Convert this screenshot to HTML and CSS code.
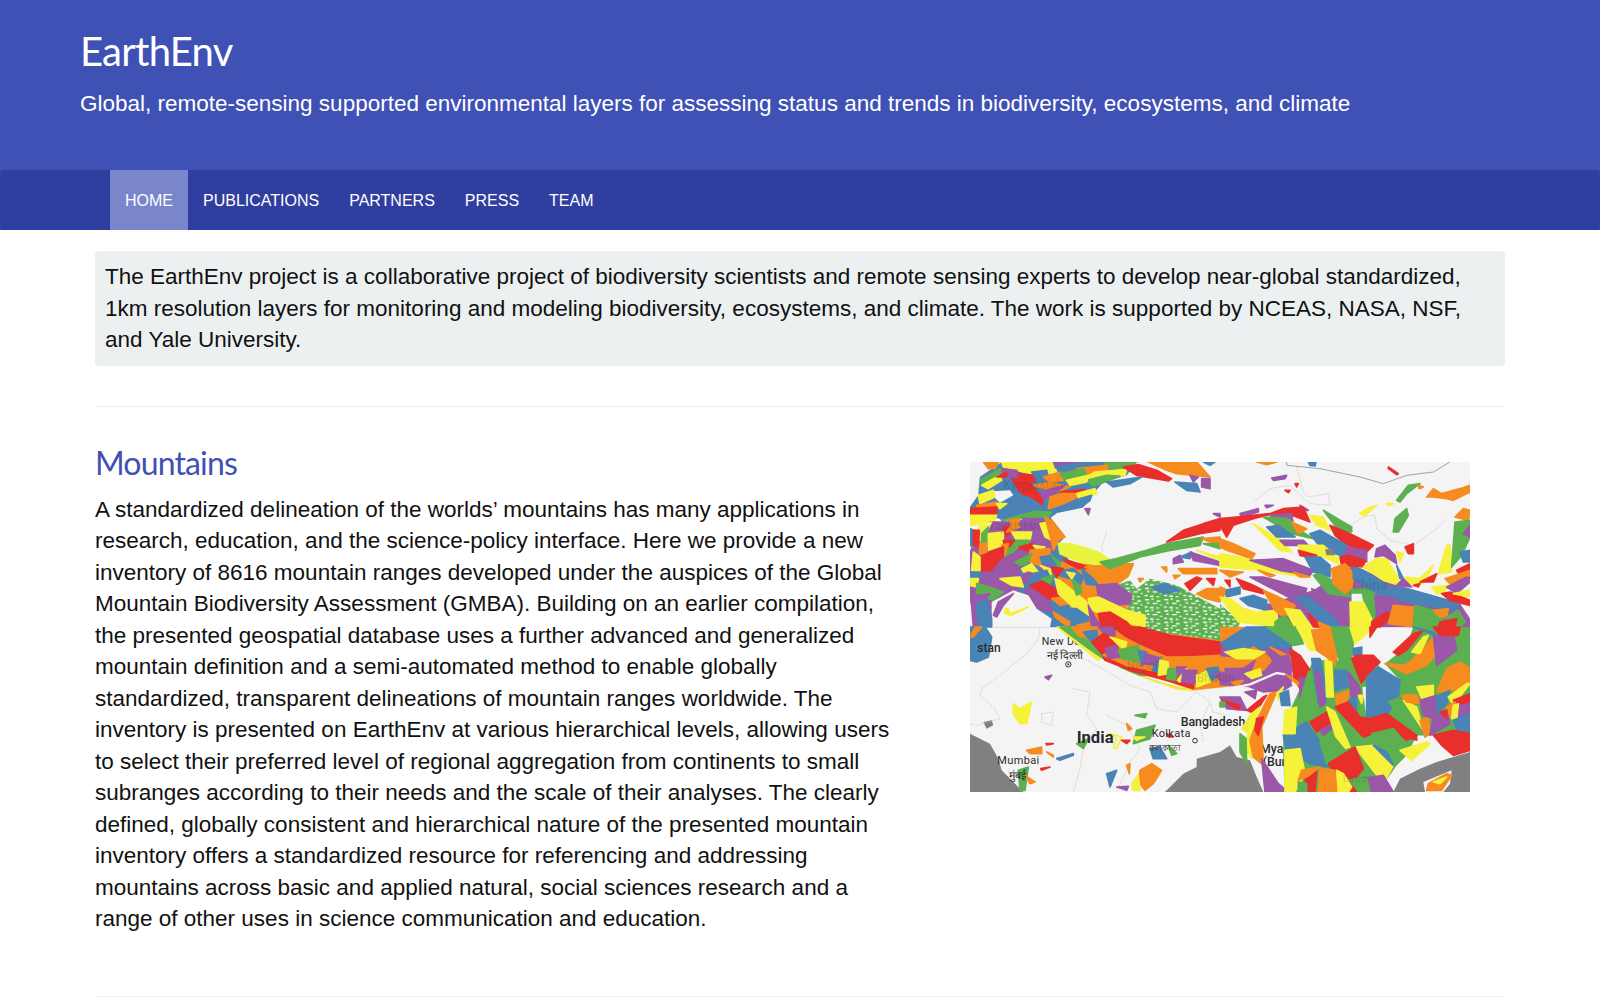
FILE: index.html
```html
<!DOCTYPE html>
<html lang="en">
<head>
<meta charset="utf-8">
<title>EarthEnv</title>
<link rel="stylesheet" href="styles.css">
</head>
<body>
<header class="masthead">
  <h1 class="site-title">EarthEnv</h1>
  <p class="site-tagline">Global, remote-sensing supported environmental layers for assessing status and trends in biodiversity, ecosystems, and climate</p>
</header>
<div class="nav-shell">
<nav class="navbar">
  <ul class="nav-list">
    <li><a class="nav-link active" href="#">HOME</a></li>
    <li><a class="nav-link" href="#">PUBLICATIONS</a></li>
    <li><a class="nav-link" href="#">PARTNERS</a></li>
    <li><a class="nav-link" href="#">PRESS</a></li>
    <li><a class="nav-link" href="#">TEAM</a></li>
  </ul>
</nav>
</div>
<main class="container">
  <div class="intro">The EarthEnv project is a collaborative project of biodiversity scientists and remote sensing experts to develop near-global standardized, 1km resolution layers for monitoring and modeling biodiversity, ecosystems, and climate. The work is supported by NCEAS, NASA, NSF, and Yale University.</div>
  <hr class="rule rule-first">
  <section class="feature">
    <div class="feature-text">
      <h2 class="feature-title">Mountains</h2>
      <p class="feature-body">A standardized delineation of the worlds’ mountains has many applications in research, education, and the science-policy interface. Here we provide a new inventory of 8616 mountain ranges developed under the auspices of the Global Mountain Biodiversity Assessment (GMBA). Building on an earlier compilation, the presented geospatial database uses a further advanced and generalized mountain definition and a semi-automated method to enable globally standardized, transparent delineations of mountain ranges worldwide. The inventory is presented on EarthEnv at various hierarchical levels, allowing users to select their preferred level of regional aggregation from continents to small subranges according to their needs and the scale of their analyses. The clearly defined, globally consistent and hierarchical nature of the presented mountain inventory offers a standardized resource for referencing and addressing mountains across basic and applied natural, social sciences research and a range of other uses in science communication and education.</p>
    </div>
    <div class="feature-media">
      <svg class="map" viewBox="0 0 1500 990" width="500" height="330" role="img" aria-label="Map of mountain ranges across Central and South Asia">
        <defs>
          <pattern id="speck" width="58" height="34" patternUnits="userSpaceOnUse">
            <rect width="58" height="34" class="g"/>
            <path d="M3 5h12M22 3h6M38 9h11M9 15h7M26 16h14M48 21h6M2 27h9M18 29h11M37 30h8" class="speck-line"/>
          </pattern>
        </defs>
        <rect width="1500" height="990" class="land"/>
        <g class="sea">
          <path d="M0 815 60 845 85 890 95 925 130 960 160 990H0Z"/>
          <path d="M585 990 640 935 680 915 680 890 750 870 780 850 800 885 840 895 860 945 880 990Z"/>
          <path d="M1270 990 1290 950 1350 920 1400 900 1500 870V990Z"/>
          <path d="M40 780 65 775 70 790 50 800Z"/>
        </g>
        <g class="borders">
          <path class="solid" d="M950 0 950 10 1050 20 1170 45 1240 65 1310 40 1390 30 1440 0"/>
          <path d="M980 15 1000 90 1015 105 1075 95 1080 130 1020 125 960 70 900 80 850 120"/>
          <path d="M1140 190 1180 165 1215 160 1220 200 1260 235 1330 250 1400 200 1430 170"/>
          <path d="M410 210 395 255 400 270"/>
          <path d="M130 440 170 470 200 465 210 495 205 530 165 580 90 640 35 680 30 700 70 735 90 770 55 780 20 790 0 785"/>
          <path d="M340 590 380 610 430 640 480 670 540 690 560 740 620 750 680 690 720 720 730 750 770 760"/>
          <path d="M215 755 250 750 245 790 215 780Z"/>
          <path d="M310 680 360 690 350 760 380 800 340 860 330 920 310 990"/>
          <path d="M410 760 470 790 510 860 480 900 440 990"/>
          <path d="M720 720 690 790 700 840"/>
          <path d="M1290 690 1260 720 1270 800"/>
        </g>
        <g class="labels">
          <text x="215" y="548" class="lb lb-sm">New Delhi</text>
          <text x="230" y="590" class="lb lb-de">नई दिल्ली</text>
          <circle cx="295" cy="607" r="8" class="dot"/>
          <circle cx="295" cy="607" r="3" class="dot-fill"/>
          <text x="632" y="792" class="lb lb-md2">Bangladesh</text>
          <text x="870" y="873" class="lb lb-md2">Myanmar</text>
          <text x="878" y="913" class="lb lb-md2">(Burma)</text>
        </g>
        <g class="under">
          <path class="b" d="M30 45 95 0H500L470 40 400 60 365 100 340 135 265 150 240 168H0V135L25 100Z"/>
          <path class="land-i" d="M70 88 120 85 130 100 90 122 72 105Z"/>
          <path class="p" d="M0 268 30 195 150 175 150 495H25L0 405Z"/>
          <path class="b" d="M150 175 240 165 285 225 265 245 300 300V495H150Z"/>
          <path class="o" d="M300 300 390 310 490 310 475 345 440 370 490 400 470 440 525 465 525 495H300Z"/>
          <path class="o" d="M262 495 395 585 590 655 670 685 900 660 900 495Z"/>
          <path class="p" d="M750 545 890 495 965 560 965 665 840 675 750 670Z"/>
          <path class="g" d="M940 820 965 735 1030 595 1170 595 1220 605 1175 665 1190 775 1250 770 1340 820 1310 880 1280 910 1240 965 1270 990H945L940 870Z"/>
          <path class="g" d="M1245 605 1310 555 1330 495H1500V865L1450 880 1390 820 1340 820 1250 755 1285 705 1290 655Z"/>
          <path class="p" d="M880 430 965 405 1030 385 1150 310 1280 370 1470 425 1500 470V495H880Z"/>
        </g>
        <g class="q1">
          <path class="o" d="M40 0H85L75 20 55 20Z"/><path class="y" d="M95 0H255L260 35 180 35 100 15Z"/><path class="p" d="M90 20 140 25 150 45 110 45Z"/>
          <path class="p" d="M250 0H350L290 15 255 12Z"/><path class="b" d="M255 15 360 0 385 5 330 20 280 35Z"/><path class="g" d="M405 0H500L450 22 400 15Z"/>
          <path class="o" d="M320 20 410 10 415 25 340 50Z"/><path class="y" d="M375 30 470 22 465 40 360 55 350 45Z"/><path class="r" d="M460 15 505 8 560 25 605 50 595 57 500 40Z"/>
          <path class="o" d="M535 0H680L720 45 620 35 590 25Z"/><path class="b" d="M700 0H735L720 10Z"/><path class="g" d="M350 55 410 40 450 42 405 60 370 72Z"/>
          <path class="b" d="M410 60 515 45 480 65 430 75Z"/><path class="b" d="M615 60 680 65 690 90 650 85Z"/><path class="p" d="M660 40 685 45 670 60Z"/><path class="p" d="M695 50 720 50 720 80 695 75Z"/>
          <path class="g" d="M30 55 90 20 95 40 40 70Z"/><path class="y" d="M35 70 90 40 95 55 55 80Z"/><path class="r" d="M80 45 110 30 110 45Z"/><path class="r" d="M145 35 195 40 195 58 150 55Z"/>
          <path class="b" d="M185 30 230 25 235 45 200 50Z"/><path class="o" d="M220 45 270 30 280 55 240 60Z"/><path class="g" d="M270 35 340 20 350 35 290 60Z"/><path class="y" d="M290 55 355 40 350 60 300 70Z"/>
          <path class="o" d="M190 70 240 60 300 75 260 90Z"/><path class="b" d="M100 60 150 55 210 90 170 90Z"/><path class="r" d="M125 50 175 55 220 115 215 130 150 90Z"/><path class="p" d="M210 90 285 70 240 105 220 110Z"/>
          <path class="r" d="M270 90 345 82 340 95 275 100Z"/><path class="o" d="M240 105 270 95 340 95 285 125 235 140Z"/><path class="y" d="M320 95 375 80 380 95 330 115Z"/><path class="b" d="M255 140 330 110 365 100 360 115 335 135 265 150Z"/>
          <path class="p" d="M345 140 360 140 355 158Z"/><path class="y" d="M25 100 70 85 75 105 30 125Z"/><path class="o" d="M20 130 80 120 85 135 25 145Z"/><path class="y" d="M80 125 110 125 90 140Z"/>
          <path class="b" d="M75 160 150 105 175 105 240 150 200 150 100 175Z"/><path class="r" d="M0 140 80 135 80 155 0 160Z"/><path class="y" d="M0 160 80 160 70 180 0 190Z"/><path class="g" d="M95 175 195 148 245 150 235 165 140 170Z"/>
          <path class="b" d="M0 200 12 205 12 255 0 250Z"/><path class="y" d="M20 220 30 190 60 190 35 240Z"/><path class="r" d="M10 205 28 205 25 255 10 250Z"/><path class="g" d="M35 215 55 195 50 240 35 245Z"/>
          <path class="o" d="M115 175 150 170 140 195Z"/><path class="p" d="M150 195 160 170 215 170 240 240 250 270 195 255 170 240Z"/><path class="p" d="M70 180 115 180 100 210 55 215Z"/><path class="y" d="M55 215 100 210 100 250 55 265Z"/>
          <path class="y" d="M210 185 235 180 245 235 225 225Z"/><path class="o" d="M225 165 250 180 285 225 265 235 250 265 240 220Z"/><path class="r" d="M100 195 135 195 110 225Z"/><path class="o" d="M130 180 150 195 110 210Z"/>
          <path class="y" d="M125 210 185 210 180 235 140 235Z"/><path class="r" d="M100 235 135 235 130 260 105 260Z"/><path class="g" d="M140 235 180 235 170 250 125 255Z"/><path class="r" d="M145 255 190 245 185 265 150 270Z"/>
          <path class="g" d="M105 260 145 255 120 280 100 285Z"/><path class="o" d="M95 250 115 245 105 280Z"/><path class="o" d="M30 245 50 245 50 275 28 275Z"/><path class="r" d="M30 285 60 270 100 255 100 300 65 330 30 330Z"/>
          <path class="y" d="M10 270 30 285 30 330 5 325Z"/><path class="p" d="M30 330 65 330 100 290 150 265 185 275 150 320 125 345 90 370 60 370 30 350Z"/><path class="y" d="M190 250 225 255 210 270Z"/><path class="o" d="M180 265 240 260 240 285 205 310 180 300Z"/>
          <path class="g" d="M135 300 185 275 170 305 150 310Z"/><path class="y" d="M155 320 185 305 205 330 160 330Z"/><path class="b" d="M210 285 245 280 265 300 250 310 220 310Z"/><path class="g" d="M245 280 280 310 270 320Z"/>
          <path class="r" d="M280 290 340 310 365 320 310 320Z"/><path class="o" d="M275 300 315 320 310 335 275 320Z"/><path class="yl" d="M265 245 300 245 385 270 415 290 395 310 330 300 270 275Z"/><path class="o" d="M345 315 400 310 490 305 475 340 430 355 390 345Z"/>
          <path class="p" d="M210 310 245 310 250 340 215 345Z"/><path class="r" d="M245 315 280 320 260 345Z"/><path class="y" d="M210 310 240 320 245 340Z"/><path class="b" d="M280 325 310 320 340 345 330 370 290 345Z"/>
          <path class="p" d="M150 345 175 330 190 335 165 375Z"/><path class="y" d="M90 350 150 345 160 375 125 370Z"/><path class="b" d="M165 375 190 335 230 325 255 375 260 395 200 370Z"/><path class="g" d="M215 350 250 340 240 365Z"/>
          <path class="p" d="M165 385 185 375 235 415 250 450 200 440Z"/><path class="r" d="M180 370 215 358 265 385 265 415 235 410Z"/><path class="o" d="M245 410 270 405 295 425 270 430Z"/>
          <path class="o" d="M265 345 300 355 330 400 320 410Z"/><path class="y" d="M255 350 270 355 350 420 355 460 320 445 265 395Z"/><path class="g" d="M305 350 330 370 345 385 320 400Z"/><path class="y" d="M290 330 315 335 305 350Z"/>
          <path class="b" d="M335 320 370 350 385 370 350 370Z"/><path class="o" d="M335 370 380 375 385 395 345 405Z"/>
          <path class="b" d="M245 430 290 440 320 440 355 465 355 495 280 495 265 455Z"/><path class="o" d="M250 450 300 480 295 495 255 465Z"/><path class="o" d="M320 490 365 480 370 495Z"/>
          <path class="b" d="M0 330 30 330 35 345 0 350Z"/><path class="y" d="M0 350 25 350 20 375 0 370Z"/><path class="g" d="M20 365 60 375 100 390 70 415 20 395Z"/>
          <path class="land-i" d="M65 420 130 385 175 400 200 440 245 470 240 495H65Z"/>
          <path class="p" d="M0 400 30 400 60 395 25 440 25 495 10 495 5 430Z"/><path class="b" d="M20 425 50 410 65 470 65 495 25 495Z"/><path class="p" d="M85 420 130 395 100 430 80 465 70 460Z"/><path class="y" d="M105 440 115 440 120 455 175 435 125 460 105 455Z"/>
          <path class="sp" d="M440 370 480 355 500 380 540 350 620 370 750 440V495H500L530 470 470 440 490 400Z"/><path class="b" d="M545 375 590 365 630 385 580 395Z"/>
          <path class="p" d="M380 370 440 365 485 400 480 425 430 430 385 405Z"/><path class="y" d="M355 410 385 405 470 445 525 460 525 495 430 475 360 440Z"/><path class="p" d="M355 430 380 475 400 495H365Z"/><path class="r" d="M385 455 420 450 470 480 485 495H395Z"/>
          <path class="g" d="M390 300 440 290 530 265 590 245 700 225 690 250 600 265 510 285 420 320Z"/><path class="r" d="M590 240 640 205 700 185 750 170V205L690 215Z"/><path class="p" d="M730 155H750V165Z"/>
          <path class="o" d="M575 315H590V330Z"/><path class="o" d="M505 350H520L510 360Z"/><path class="o" d="M625 320H740V335H640Z"/><path class="o" d="M610 340H630L615 350Z"/><path class="r" d="M645 365 680 345 695 350 660 385Z"/><path class="r" d="M710 350H735L730 370Z"/><path class="o" d="M680 395 710 380H750V420L710 410Z"/>
          <path class="p" d="M610 290 630 280 640 300 610 305Z"/><path class="b" d="M630 285 665 270 660 290Z"/><path class="p" d="M660 270 750 300V310L670 295Z"/><path class="y" d="M680 265 750 285V295Z"/><path class="o" d="M695 230 750 225V245L720 240Z"/><path class="g" d="M700 245 750 245V260Z"/>
        </g>
        <g class="q2" transform="translate(750 0)">
          <path class="o" d="M110 0H170L140 8Z"/><path class="b" d="M265 0H288L285 12 270 10Z"/><path class="p" d="M155 48 200 40 195 50 160 55Z"/><path class="r" d="M225 65H235L230 75Z"/><path class="r" d="M195 85H210L205 92Z"/><path class="r" d="M505 15 535 35 530 38 505 20Z"/>
          <path class="g" d="M530 115 565 70 600 65 560 95 540 120Z"/><path class="o" d="M595 70 610 75 598 80Z"/><path class="o" d="M620 105 640 80 665 95 720 80 750 70V90L700 115 680 110 640 105Z"/><path class="o" d="M705 165 730 140 750 145 745 175Z"/>
          <path class="y" d="M420 155 440 140 470 130 435 160Z"/><path class="y" d="M500 125H520L505 132Z"/><path class="g" d="M310 145 360 175 395 195V210H360Z"/><path class="g" d="M520 210 525 170 560 140 565 160 535 210Z"/>
          <path class="p" d="M60 155 115 140V150L65 165Z"/><path class="p" d="M135 130H160L140 137Z"/><path class="p" d="M240 130 265 145 245 145Z"/>
          <path class="r" d="M0 170 50 165 150 155 190 140 250 135 270 180 215 160 160 155 100 170 40 190 20 225 0 190Z"/><path class="p" d="M150 160 215 155 220 190 170 175Z"/><path class="g" d="M130 165 205 170 240 205 280 230 215 215Z"/>
          <path class="y" d="M100 185 140 210 185 235 215 270 180 265 140 225Z"/><path class="b" d="M140 195 175 190 225 225H170Z"/><path class="o" d="M215 180 260 200 235 215Z"/><path class="y" d="M270 160 310 165 330 205 290 190Z"/>
          <path class="p" d="M180 235H250L265 250H195Z"/><path class="r" d="M330 190 390 215 460 250 440 270 380 250 345 220Z"/><path class="b" d="M270 215 300 205 380 250 370 285 300 255Z"/>
          <path class="y" d="M235 250H310L355 290V305L300 280 240 265Z"/><path class="r" d="M235 265 290 280 285 290 240 280Z"/><path class="sea-i" d="M315 262H340L345 280H320Z"/><path class="p" d="M380 255 440 265V300L375 285Z"/><path class="r" d="M360 285 385 280 435 295 430 315 365 310Z"/><path class="b" d="M255 285H300L330 310V345L280 330Z"/>
          <path class="o" d="M0 230 40 245 105 275 95 290 20 265 0 255Z"/><path class="y" d="M0 275 60 285 150 310 270 340 250 345 130 325 0 315Z"/><path class="p" d="M90 295 190 290 280 325 270 340 180 325Z"/><path class="o" d="M115 325 165 340 150 345Z"/><path class="o" d="M0 325 70 330 30 345Z"/><path class="o" d="M220 330 270 345H240Z"/>
          <path class="r" d="M50 350 90 365 130 385V395L70 380Z"/><path class="r" d="M15 355H30V375Z"/><path class="b" d="M15 385 60 375V395L20 405Z"/><path class="o" d="M0 375 15 380 10 410H0Z"/><path class="b" d="M60 410 100 400 140 415V445L85 430Z"/><path class="p" d="M90 345H130L260 380 250 410H215Z"/>
          <path class="g" d="M280 340 300 335 380 380 395 410 325 395Z"/><path class="o" d="M335 320 375 305 405 340 395 380 375 395 340 365Z"/>
          <path class="sp" d="M0 425 60 480 55 495H0Z"/><path class="y" d="M0 405 30 410 70 440 110 450 170 445 175 495 55 480Z"/><path class="o" d="M130 385 165 400 225 430 220 450 190 465 165 445Z"/><path class="g" d="M165 480 195 460 220 495H165Z"/><path class="y" d="M195 440 240 445 275 495H225Z"/>
          <path class="p" d="M275 380 325 400 395 410 390 480H345L295 425Z"/><path class="b" d="M225 405H265L345 470 360 495H320Z"/><path class="r" d="M265 455 290 480 300 495H280Z"/><path class="o" d="M295 480 330 495H300Z"/>
          <path class="g" d="M395 380H450L475 395 465 460 450 495H395Z"/><path class="land-i" d="M395 395H425L430 420H395Z"/><path class="y" d="M390 420H430L455 470 450 495H392Z"/>
          <path class="y" d="M430 315 470 290H500L530 340 540 370 490 355Z"/><path class="b" d="M400 315 430 325 510 375 560 380 720 425 705 445 620 430 540 415 475 395 400 350Z"/>
          <path class="p" d="M470 260 495 250 525 280 530 305 490 280 465 285Z"/><path class="r" d="M555 255 580 245V275H565Z"/><path class="y" d="M530 270 550 275 540 300Z"/><path class="b" d="M530 310 550 350H540Z"/><path class="y" d="M555 345 600 350 640 310 610 365H570Z"/><path class="y" d="M655 335 680 250H690L695 330Z"/>
          <path class="g" d="M695 315 705 180 750 175V225L725 280Z"/><path class="p" d="M730 215 750 190V225Z"/><path class="b" d="M720 270 750 265V300H730Z"/><path class="r" d="M710 325 750 305V350H725Z"/><path class="o" d="M675 350 750 325V340L690 365Z"/>
          <path class="y" d="M635 375 690 370 665 395H650Z"/><path class="p" d="M680 375 740 345 750 360 710 395Z"/><path class="r" d="M665 395 690 390 750 415V430L690 415Z"/><path class="y" d="M700 395 750 385V405Z"/><path class="r" d="M580 370 600 365 595 375Z"/><path class="r" d="M600 360 650 335 640 360Z"/><path class="p" d="M530 370 550 350 575 375Z"/>
          <path class="p" d="M465 400 530 410 520 460H470Z"/><path class="r" d="M455 480 500 450 515 460 480 495H455Z"/><path class="o" d="M520 430 580 435V495L505 485Z"/><path class="g" d="M585 430 640 445 670 470 660 495H580Z"/><path class="o" d="M640 445 685 440 680 465H660Z"/><path class="g" d="M680 465 715 445 735 480 720 495H670Z"/><path class="r" d="M660 480 710 470 705 495H655Z"/>
        </g>
        <g class="q3" transform="translate(0 495)">
          <path class="b" d="M0 0H45L65 30 55 90 20 105 0 100Z"/><path class="o" d="M15 0H35L10 30H0Z"/>
          <path class="sp" d="M430 0H750V40L600 20Z"/>
          <path class="y" d="M262 0H280L395 90 385 100Z"/><path class="g" d="M270 0H310L395 80 400 95 350 60Z"/><path class="o" d="M305 0H385L360 25 330 30Z"/><path class="p" d="M385 0H435V25L410 30Z"/><path class="b" d="M340 15 380 10 385 40 365 45Z"/>
          <path class="r" d="M430 0H510L600 25 750 45V90L670 85 590 85 510 50 470 30Z"/><path class="r" d="M365 45 400 20 425 30 445 65 420 70 395 80Z"/><path class="p" d="M405 65 440 55 450 90 415 95Z"/><path class="y" d="M420 30 470 45 465 70Z"/>
          <path class="g" d="M445 70 505 55V105L455 95Z"/><path class="b" d="M505 70 530 75 515 115Z"/><path class="p" d="M525 80 575 95 565 115 520 110Z"/><path class="b" d="M555 115 575 90 570 140H545Z"/><path class="o" d="M575 95 750 85V120H600Z"/>
          <path class="yd" d="M470 130 560 165 670 190 620 185Z"/><path class="g" d="M450 120 535 145 510 145Z"/><path class="r" d="M400 90 470 120 590 145 670 170V185L590 160 480 130 405 100Z"/><path class="y" d="M570 100 595 105V140L565 145Z"/><path class="g" d="M595 125H620L615 160 590 155Z"/><path class="p" d="M620 120H650L625 165Z"/><path class="y" d="M650 125 630 165 622 160Z"/><path class="p" d="M640 130H680V170L635 165Z"/>
          <path class="y" d="M680 145 730 125 720 165 680 180Z"/><path class="b" d="M710 125 750 120V145L725 160Z"/><path class="p" d="M730 135H750V160Z"/>
          <path class="y" d="M130 230 150 245 185 225 170 290H150L130 260Z"/><path class="p" d="M225 150 245 145 235 158Z"/><path class="g" d="M495 265 530 260 525 272Z"/><path class="o" d="M470 290 485 305 475 310Z"/>
          <path class="g" d="M500 310 555 295 540 335 490 350Z"/><path class="yo" d="M420 320 455 330 440 365 430 360 440 335Z"/><path class="y" d="M490 330H525L500 340Z"/><path class="r" d="M455 340H480L470 350Z"/><path class="g" d="M320 350 355 335 340 365Z"/>
          <path class="o" d="M170 370 215 360V380H180Z"/><path class="o" d="M230 375 250 385V390Z"/><path class="r" d="M228 350H250L230 354Z"/><path class="b" d="M260 395 310 380V385L270 400Z"/><path class="r" d="M212 425 240 420 215 430Z"/><path class="g" d="M145 430 175 420 165 490H150Z"/><path class="o" d="M165 445 195 465 180 470Z"/>
          <path class="b" d="M540 365 570 360 590 395H550Z"/><path class="g" d="M595 355 620 380 605 385Z"/><path class="r" d="M590 320 610 330 595 330Z"/><path class="o" d="M510 430 545 410 575 430 550 470 525 490 505 465Z"/><path class="y" d="M485 470 505 445 510 490H490Z"/><path class="o" d="M470 415 480 410 478 440Z"/><path class="b" d="M410 440 440 430 420 480Z"/><path class="p" d="M440 480 475 478 470 490Z"/>
        </g>
        <g class="q4" transform="translate(750 495)">
          <path class="b" d="M0 50 80 0H140L210 35 215 65 150 60 100 70 40 75Z"/><path class="g" d="M140 0H230L250 50 220 55Z"/><path class="y" d="M230 0H275L290 70H270Z"/><path class="o" d="M275 10 330 0 360 50 345 115 320 90 290 70Z"/><path class="g" d="M335 0H395L400 50 395 90 370 130 355 90Z"/><path class="y" d="M390 0H450L440 20 405 50Z"/><path class="r" d="M450 0H470L450 30Z"/>
          <path class="b" d="M400 65 425 60V85H400Z"/><path class="r" d="M395 95 410 85H460L480 105 425 170Z"/><path class="o" d="M0 90 50 95 100 60 140 85 155 100 130 130 30 135 0 130Z"/><path class="y" d="M15 75 70 65 135 75 100 95H50Z"/><path class="p" d="M15 125H70L105 100 90 140 65 160 20 155Z"/><path class="y" d="M75 140 120 125 125 145 95 155Z"/><path class="o" d="M35 165 70 160 50 180Z"/>
          <path class="o" d="M150 60 235 100 220 110Z"/><path class="p" d="M155 95 205 85 220 130 175 140Z"/><path class="r" d="M210 65 240 85 270 130 240 185 220 150V120Z"/><path class="o" d="M195 140 235 165V175Z"/>
          <path class="river" d="M0 190 90 172 170 138 195 142"/>
          <path class="p" d="M90 180 200 160 215 175 190 190 130 195Z"/><path class="p" d="M75 195 110 190 105 215Z"/><path class="p" d="M0 210H60L80 250 20 245Z"/><path class="r" d="M5 220 60 235 55 248Z"/><path class="g" d="M0 225H15L12 240H0Z"/><path class="r" d="M80 250 130 210 140 205 105 260Z"/>
          <path class="yd" d="M65 305 95 260 105 300 90 320Z"/><path class="y" d="M95 260 120 240 90 320 95 395 75 360Z"/><path class="g" d="M60 320 78 335 80 410 60 375Z"/><path class="o" d="M115 270 150 200 170 195 125 300 130 415 100 390 90 340Z"/><path class="r" d="M110 275 130 270 115 325 105 310Z"/><path class="p" d="M125 395 175 470 205 495H135Z"/><path class="y" d="M170 200 190 180 175 220Z"/><path class="b" d="M180 200 205 190 210 235H185Z"/>
          <path class="p" d="M240 150 270 160 260 230 240 240Z"/><path class="g" d="M265 135 280 130 285 215 250 290 235 265V240Z"/><path class="b" d="M275 95H300L320 190 318 225 295 230Z"/><path class="p" d="M285 130 300 140 315 230 300 240Z"/><path class="y" d="M315 100 335 105 340 210H320Z"/>
          <path class="b" d="M190 325 260 285 300 345 325 420 270 410 200 370Z"/><path class="y" d="M195 250 230 240 225 320H190Z"/><path class="r" d="M270 285 330 250 335 285 290 315Z"/><path class="p" d="M300 310 340 290 350 295 310 325Z"/><path class="g" d="M350 260 400 310 450 355 390 360Z"/><path class="y" d="M320 240 345 255 390 360 360 370Z"/><path class="g" d="M300 345 330 315 375 370 320 410Z"/><path class="y" d="M195 370 240 365 255 440 225 495H195Z"/>
          <path class="b" d="M345 130H380L385 180 345 190Z"/><path class="o" d="M345 205 385 190V220L350 235Z"/><path class="p" d="M385 135 420 180V205L395 215Z"/><path class="y" d="M415 205H430L425 230Z"/><path class="g" d="M420 180 475 115 440 175Z"/><path class="b" d="M440 150 475 120 540 160 535 210 500 265 440 280Z"/><path class="b" d="M385 220 410 210V255H395Z"/>
          <path class="r" d="M345 240 385 225 420 270 450 275 500 260 590 325 560 340 520 305 460 320 430 330Z"/><path class="g" d="M455 320 520 305 555 345 530 385 460 350Z"/><path class="g" d="M505 225 540 210 590 300 580 310Z"/><path class="y" d="M550 220 590 240 610 310Z"/><path class="o" d="M545 205 590 200 600 230 560 225Z"/><path class="o" d="M600 280 625 270 630 320 615 330Z"/>
          <path class="y" d="M405 360 460 355 520 415 490 470Z"/><path class="r" d="M325 410 405 360 430 425 405 455 350 450Z"/><path class="b" d="M460 355 500 375 520 415Z"/><path class="y" d="M540 370 620 345 630 350 575 400Z"/><path class="p" d="M430 455 490 445 520 495H450Z"/><path class="g" d="M400 455H440L450 495H405Z"/><path class="r" d="M380 455 410 495H385Z"/><path class="y" d="M350 430 370 440 395 480 385 495H350Z"/>
          <path class="o" d="M300 425 345 430 350 495H295Z"/><path class="r" d="M255 450 290 430 285 495H260Z"/><path class="o" d="M245 430 300 420 260 450 235 460Z"/><path class="g" d="M235 465 260 470V495H235Z"/>
          <path class="land-i" d="M610 465 695 430 690 470 670 495H615Z"/><path class="o" d="M625 470 680 440 695 445 665 490H620Z"/><path class="y" d="M640 465 680 450 660 470Z"/>
          <path class="o" d="M495 110 555 115 575 100 610 65 640 30 650 80 620 115 560 140Z"/><path class="p" d="M640 25 700 20 710 70 650 115Z"/><path class="r" d="M520 75 580 20 610 10 560 70 535 85Z"/><path class="y" d="M575 75 610 30 625 25 600 80Z"/><path class="b" d="M580 0 640 15 650 25Z"/><path class="r" d="M640 0H720L715 25H660Z"/>
          <path class="g" d="M545 195 600 145 690 100V130L640 190 590 200Z"/><path class="y" d="M590 180 640 175V210L610 225Z"/><path class="o" d="M680 125 720 105 750 125V170L700 190 650 195Z"/><path class="p" d="M600 220 650 205 645 275 610 265Z"/><path class="b" d="M650 210 690 190 680 230 650 260Z"/><path class="y" d="M685 210 740 170H750L700 235Z"/><path class="r" d="M700 220 750 200V225L715 235Z"/>
          <path class="o" d="M680 240 705 225 710 260 690 270Z"/><path class="y" d="M700 235 715 230 712 275H695Z"/><path class="p" d="M640 270 680 250 690 290 630 325Z"/><path class="r" d="M660 255 680 250V275Z"/><path class="p" d="M720 235 750 230V280H715Z"/><path class="b" d="M700 280 750 260V320H715Z"/><path class="r" d="M640 325 700 310 750 320V370L700 385 665 355Z"/><path class="r" d="M560 330 590 325V340Z"/>
        </g>
        <g class="labels">
          <text x="22" y="570" class="lb lb-md">stan</text>
          <text x="320" y="842" class="lb lb-lg">India</text>
          <text x="545" y="826" class="lb lb-xs">Kolkata</text>
          <circle cx="675" cy="836" r="7" class="dot"/>
          <text x="537" y="868" class="lb lb-bn">কলকাতা</text>
          <text x="82" y="906" class="lb lb-xs">Mumbai</text>
          <text x="116" y="950" class="lb lb-de">मुंबई</text>
        </g>
        <g class="labels-faint">
          <text x="100" y="82" class="lb lb-md">Kyrgyzstan</text>
          <text x="55" y="205" class="lb lb-md">Tajikistan</text>
          <text x="1145" y="383" class="lb lb-china">China</text>
          <text x="470" y="625" class="lb lb-md">Nepal</text>
          <text x="680" y="660" class="lb lb-md">Bhutan</text>
          <text x="1118" y="960" class="lb lb-sm">Laos</text>
        </g>
      </svg>
    </div>
  </section>
  <hr class="rule rule-last">
</main>
</body>
</html>
```

FILE: styles.css
```css
* {
  box-sizing: border-box;
}

html {
  overflow: hidden;
}

body {
  margin: 0;
  font-family: "Liberation Sans", Arial, sans-serif;
  font-size: 22.5px;
  line-height: 1.4;
  color: #111;
  background: #fff;
}

.masthead {
  height: 170px;
  padding: 30px 80px 0;
  background: #3f51b5;
  color: #fff;
}

.site-title {
  margin: 0;
  font-family: Lato, sans-serif;
  font-size: 40px;
  font-weight: 400;
  line-height: 43px;
  letter-spacing: -0.75px;
}

.site-tagline {
  margin: 15px 0 0;
}

.nav-shell {
  background: #3f51b5;
}

.navbar {
  height: 60px;
  padding-left: 110px;
  background: #303f9f;
  border-radius: 4px;
}

.nav-list {
  display: flex;
  height: 100%;
  margin: 0;
  padding: 0;
  list-style: none;
}

.nav-link {
  display: block;
  height: 100%;
  padding: 20px 15px 0;
  font-size: 16px;
  line-height: 22px;
  color: #fff;
  text-decoration: none;
}

.nav-link.active {
  background: #7986cb;
}

.container {
  padding: 21px 95px 0;
}

.intro {
  padding: 10px;
  background: #ecf0f1;
  border-radius: 4px;
}

.rule {
  height: 1px;
  margin: 0;
  border: 0;
  background: #ecf0f1;
}

.rule-first {
  margin-top: 40px;
}

.rule-last {
  margin-top: 61px;
}

.feature {
  display: flex;
  gap: 30px;
  margin-top: 34px;
}

.feature-text {
  flex: 0 0 810px;
}

.feature-title {
  margin: 0;
  font-family: Lato, sans-serif;
  font-size: 32px;
  font-weight: 400;
  line-height: 44px;
  letter-spacing: -0.85px;
  color: #3f51b5;
}

.feature-body {
  margin: 9px 0 0;
}

.feature-media {
  flex: 1;
  display: flex;
  justify-content: center;
  padding-top: 21px;
}

.map {
  display: block;
  flex: none;
}

.land { fill: #f4f4f4; }
.land-i { fill: #f4f4f4; }
.sea { fill: #808080; }
.sea-i { fill: #808080; }
.borders { fill: none; stroke: #bdbdbd; stroke-width: 2; stroke-dasharray: 5 3; }
.borders .solid { stroke: #a3a3a3; stroke-dasharray: none; stroke-width: 3; }
.river { fill: none; stroke: #f4f4f4; stroke-width: 7; }
.r { fill: #e82f2c; stroke: #e82f2c; }
.o { fill: #f68b1f; stroke: #f68b1f; }
.y { fill: #f6f23a; stroke: #f6f23a; }
.yl { fill: #e8f53c; stroke: #e8f53c; }
.yd { fill: #f0e93a; stroke: #f0e93a; }
.yo { fill: none; stroke: #f6f23a; stroke-width: 5; }
.g { fill: #5cb050; stroke: #5cb050; }
.b { fill: #4a83b6; stroke: #4a83b6; }
.p { fill: #9b57a8; stroke: #9b57a8; }
.q1 path, .q2 path, .q3 path, .q4 path { stroke-width: 5; stroke-linejoin: round; }
.q1 .land-i, .q2 .land-i, .q4 .land-i, .q2 .sea-i { stroke-width: 0; }
.q4 .river { stroke-width: 7; }
.sp { fill: url(#speck); }
.speck-line { fill: none; stroke: #fff; stroke-width: 4; }
.lb { font-family: Roboto, sans-serif; fill: #2a2a2a; }
.lb-xs { font-size: 33px; letter-spacing: 1px; }
.lb-sm { font-size: 32px; letter-spacing: 1px; }
.lb-md { font-size: 36px; font-weight: 500; }
.lb-md2 { font-size: 37px; font-weight: 500; }
.lb-lg { font-size: 50px; font-weight: 700; }
.lb-china { font-size: 42px; font-weight: 500; }
.lb-de, .lb-bn { font-family: "Noto Sans CJK SC", "DejaVu Sans", sans-serif; font-size: 32px; font-weight: 500; }
.lb-bn { font-size: 28px; }
.labels-faint { opacity: 0.16; }
.dot { fill: none; stroke: #333; stroke-width: 3; }
.dot-fill { fill: #333; }
```
